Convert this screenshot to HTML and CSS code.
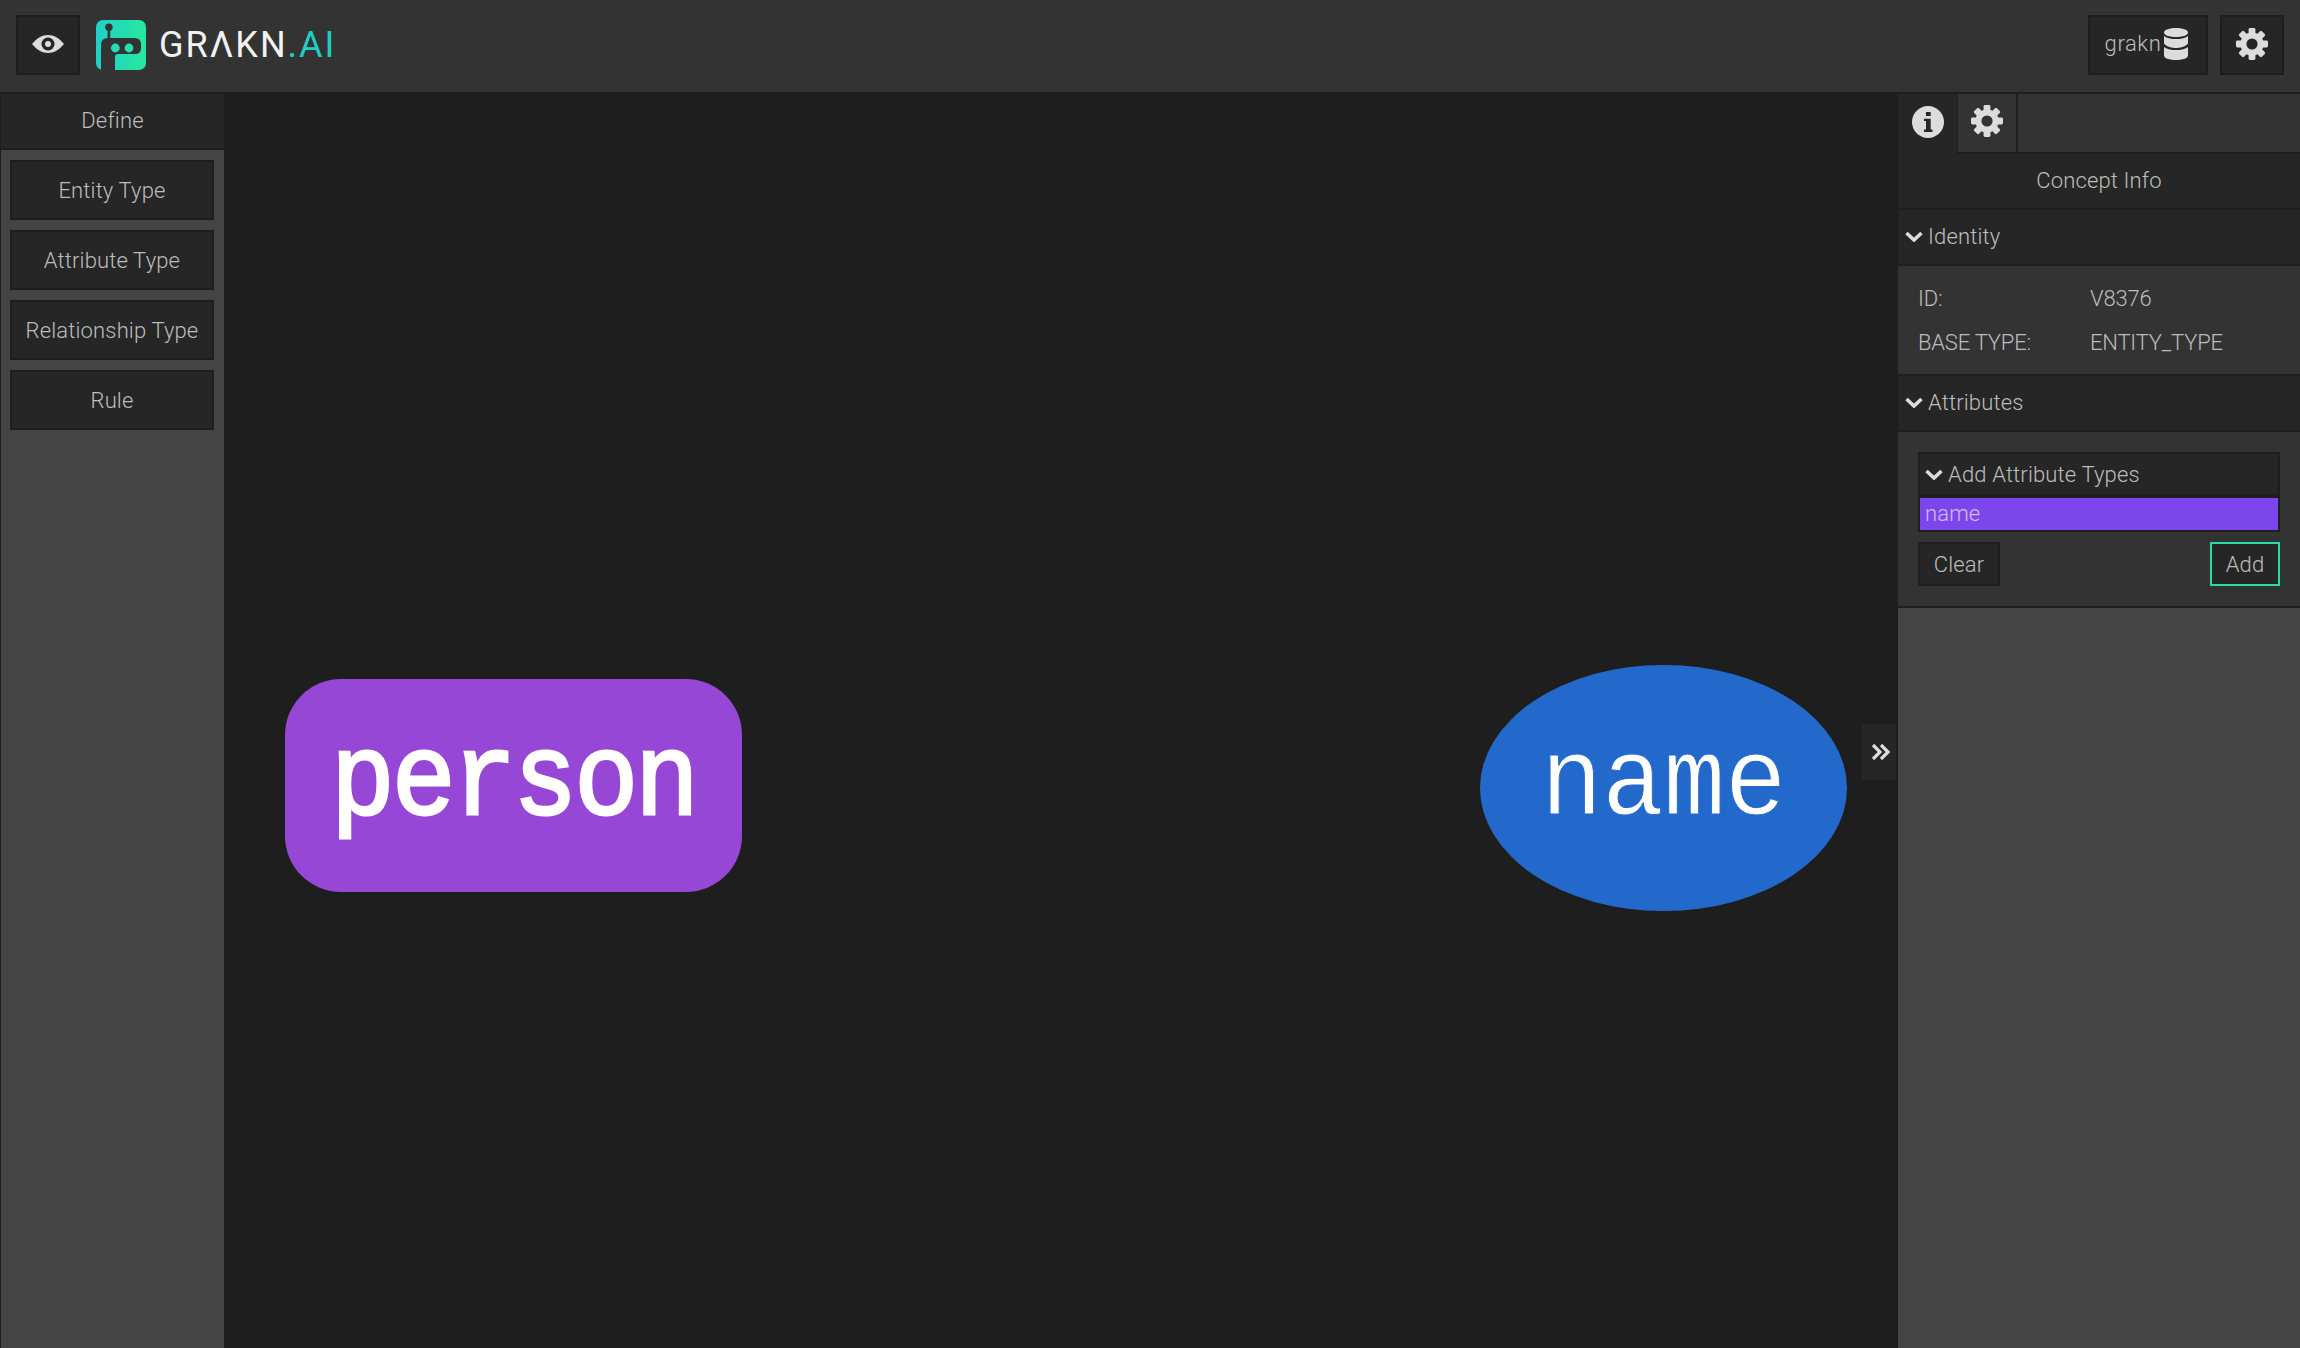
FILE: index.html
```html
<!DOCTYPE html>
<html>

<head>
  <meta charset="utf-8">
  <title>Grakn Workbase</title>
  <link rel="stylesheet" href="styles.css">
</head>

<body>
  <svg class="icon-defs" width="0" height="0">
    <symbol id="cog" viewBox="0 0 32 32">
      <circle cx="16" cy="16" r="8.6" fill="none" stroke="currentColor" stroke-width="6" />
      <rect x="12.6" y="0" width="6.8" height="9" rx="1.4" />
      <rect x="12.6" y="0" width="6.8" height="9" rx="1.4" transform="rotate(45 16 16)" />
      <rect x="12.6" y="0" width="6.8" height="9" rx="1.4" transform="rotate(90 16 16)" />
      <rect x="12.6" y="0" width="6.8" height="9" rx="1.4" transform="rotate(135 16 16)" />
      <rect x="12.6" y="0" width="6.8" height="9" rx="1.4" transform="rotate(180 16 16)" />
      <rect x="12.6" y="0" width="6.8" height="9" rx="1.4" transform="rotate(225 16 16)" />
      <rect x="12.6" y="0" width="6.8" height="9" rx="1.4" transform="rotate(270 16 16)" />
      <rect x="12.6" y="0" width="6.8" height="9" rx="1.4" transform="rotate(315 16 16)" />
    </symbol>
    <symbol id="chevron" viewBox="0 0 18 12">
      <path d="M1.5 3 L9 10 L16.5 3" fill="none" stroke="currentColor" stroke-width="3.6" />
    </symbol>
  </svg>

  <header class="topbar">
    <button class="top-btn eye-btn">
      <svg width="32" height="18" viewBox="0 0 32 18">
        <path d="M0 9 C5 3 10 0 16 0 C22 0 27 3 32 9 C27 15 22 18 16 18 C10 18 5 15 0 9 Z" fill="#dcdcdc" />
        <circle cx="16" cy="9" r="6.5" fill="#262626" />
        <circle cx="16" cy="9" r="3" fill="#dcdcdc" />
      </svg>
    </button>
    <div class="logo">
      <svg width="50" height="50" viewBox="0 0 50 50">
        <defs>
          <linearGradient id="logoGrad" x1="0" y1="0" x2="1" y2="0">
            <stop offset="0" stop-color="#1fd0c8" />
            <stop offset="1" stop-color="#27e89f" />
          </linearGradient>
        </defs>
        <rect width="50" height="50" rx="7" fill="url(#logoGrad)" />
        <path d="M5 50 V25 Q5 18 12 18 H38 Q45 18 45 24 V28 Q45 34 39 34 H22 Q19 34 19 37 V50 Z" fill="#333" />
        <rect x="11.6" y="7" width="2.6" height="12" fill="#333" />
        <circle cx="12.9" cy="7.3" r="3.7" fill="#333" />
        <circle cx="19.3" cy="28" r="4.4" fill="#25dbb8" />
        <circle cx="33" cy="28" r="4.4" fill="#26e0ae" />
      </svg>
      <span class="logo-text">GR&#923;KN<span class="logo-ai">.AI</span></span>
    </div>
    <div class="top-right">
      <button class="top-btn keyspace-btn">
        <span>grakn</span>
        <svg width="24" height="32" viewBox="0 0 24 32">
          <path d="M0 4.5 C0 1.5 6 0 12 0 C18 0 24 1.5 24 4.5 C24 7.5 18 9 12 9 C6 9 0 7.5 0 4.5 Z" fill="#dcdcdc" />
          <path d="M0 8 C3 10.5 8 11 12 11 C16 11 21 10.5 24 8 V15.5 C21 19 16 20 12 20 C8 20 3 19 0 15.5 Z" fill="#dcdcdc" />
          <path d="M0 19 C3 21.5 8 22 12 22 C16 22 21 21.5 24 19 V27.5 C24 30.5 18 32 12 32 C6 32 0 30.5 0 27.5 Z" fill="#dcdcdc" />
        </svg>
      </button>
      <button class="top-btn cog-btn">
        <svg class="cog" width="32" height="32"><use href="#cog" /></svg>
      </button>
    </div>
  </header>

  <main class="workspace">
    <aside class="left-panel">
      <div class="panel-title">Define</div>
      <div class="define-list">
        <button class="define-btn">Entity Type</button>
        <button class="define-btn">Attribute Type</button>
        <button class="define-btn">Relationship Type</button>
        <button class="define-btn">Rule</button>
      </div>
    </aside>

    <section class="canvas">
      <div class="node node-entity"><span>person</span></div>
      <div class="node node-attribute"><span>name</span></div>
      <button class="collapse-btn">
        <svg width="20" height="18" viewBox="0 0 20 18">
          <path d="M2 2 L9 9 L2 16 M10 2 L17 9 L10 16" fill="none" stroke="#dcdcdc" stroke-width="3.2" />
        </svg>
      </button>
    </section>

    <aside class="right-panel">
      <div class="tabs">
        <div class="tab tab-active">
          <svg width="32" height="32" viewBox="0 0 32 32">
            <circle cx="16" cy="16" r="16" fill="#dcdcdc" />
            <rect x="14" y="6" width="4.7" height="4" fill="#262626" />
            <path d="M12 12.7 H18.7 V23.5 H20.5 V26 H12 V23.5 H14 V15 H12 Z" fill="#262626" />
          </svg>
        </div>
        <div class="tab tab-settings">
          <svg class="cog" width="32" height="32"><use href="#cog" /></svg>
        </div>
        <div class="tab-rest"></div>
      </div>
      <div class="panel-title">Concept Info</div>

      <div class="section-head">
        <svg class="chevron" width="18" height="12"><use href="#chevron" /></svg>
        Identity
      </div>
      <div class="section-body identity">
        <div class="info-row"><span class="info-key">ID:</span><span>V8376</span></div>
        <div class="info-row"><span class="info-key">BASE TYPE:</span><span>ENTITY_TYPE</span></div>
      </div>

      <div class="section-head">
        <svg class="chevron" width="18" height="12"><use href="#chevron" /></svg>
        Attributes
      </div>
      <div class="section-body attributes">
        <div class="picker">
          <div class="picker-head">
            <svg class="chevron" width="18" height="12"><use href="#chevron" /></svg>
            Add Attribute Types
          </div>
          <div class="picker-item">name</div>
        </div>
        <div class="picker-actions">
          <button class="small-btn">Clear</button>
          <button class="small-btn small-btn-add">Add</button>
        </div>
      </div>
    </aside>
  </main>
</body>

</html>
```
FILE: styles.css
```css
* {
  box-sizing: border-box;
}

html,
body {
  height: 100%;
}

body {
  margin: 0;
  display: flex;
  flex-direction: column;
  overflow: hidden;
  background-color: #1e1e1e;
  color: #bdbdbd;
  font-family: Roboto, sans-serif;
  font-size: 22px;
  font-weight: 300;
  letter-spacing: 0.15px;
}

button {
  font: inherit;
  letter-spacing: inherit;
  color: inherit;
  padding: 0;
  cursor: pointer;
}

svg {
  display: block;
  flex: none;
}

.icon-defs {
  position: absolute;
}

.cog {
  fill: #dcdcdc;
  color: #dcdcdc;
}

.chevron {
  color: #dcdcdc;
}

/* top bar */
.topbar {
  height: 94px;
  flex: none;
  display: flex;
  align-items: center;
  padding: 0 16px 2px;
  background-color: #333;
  border-bottom: 2px solid #1e1e1e;
}

.top-btn {
  height: 60px;
  display: flex;
  align-items: center;
  justify-content: center;
  padding-bottom: 3px;
  background-color: #262626;
  border: 2px solid #1e1e1e;
}

.eye-btn {
  width: 64px;
}

.logo {
  display: flex;
  align-items: center;
  margin-left: 16px;
}

.logo-text {
  margin-left: 13px;
  font-size: 36px;
  font-weight: 400;
  letter-spacing: 2px;
  color: #f2f2f2;
}

.logo-ai {
  color: #1fcfc4;
}

.top-right {
  margin-left: auto;
  display: flex;
  gap: 12px;
}

.keyspace-btn {
  width: 120px;
  gap: 3px;
  padding-right: 3px;
  letter-spacing: 0.6px;
}

.cog-btn {
  width: 64px;
}

/* main layout */
.workspace {
  flex: 1;
  min-height: 0;
  display: flex;
}

.left-panel {
  width: 224px;
  flex: none;
  background-color: #444;
  border-left: 1px solid #1e1e1e;
}

.panel-title {
  height: 56px;
  display: flex;
  align-items: center;
  justify-content: center;
  padding-bottom: 2px;
  background-color: #262626;
  border-bottom: 2px solid #1e1e1e;
}

.define-list {
  display: flex;
  flex-direction: column;
  gap: 10px;
  padding: 10px 10px 0 9px;
}

.define-btn {
  height: 60px;
  background-color: #262626;
  border: 2px solid #1e1e1e;
}

.canvas {
  flex: 1;
  position: relative;
  background-color: #1e1e1e;
}

.node {
  position: absolute;
  display: flex;
  align-items: center;
  justify-content: center;
  color: #fff;
  font-family: "Liberation Mono", monospace;
}

.node-entity {
  left: 61px;
  top: 585px;
  width: 457px;
  height: 213px;
  border-radius: 56px;
  background-color: #9647d5;
  font-size: 116px;
  letter-spacing: -3.5px;
  -webkit-text-stroke: 3px #fff;
}

.node-attribute {
  left: 1256px;
  top: 571px;
  width: 367px;
  height: 246px;
  border-radius: 50%;
  background-color: #2369cb;
  font-size: 112px;
  letter-spacing: -0.5px;
  -webkit-text-stroke: 1px #2369cb;
}

.node span {
  display: block;
}

.node-entity span {
  transform: scaleX(0.92);
  margin-top: -6px;
}

.node-attribute span {
  transform: scaleX(0.92);
  margin-top: -8px;
}

.collapse-btn {
  position: absolute;
  right: 2px;
  top: 630px;
  width: 34px;
  height: 56px;
  display: flex;
  align-items: center;
  justify-content: center;
  padding-left: 3px;
  background-color: #262626;
  border: none;
}

/* right panel */
.right-panel {
  width: 402px;
  flex: none;
  background-color: #444;
}

.tabs {
  height: 60px;
  display: flex;
  background-color: #333;
}

.tab {
  display: flex;
  align-items: center;
  justify-content: center;
  padding-bottom: 4px;
}

.tab-active {
  width: 59px;
  background-color: #262626;
}

.tab-settings {
  width: 61px;
  border-left: 1px solid #1e1e1e;
  border-right: 2px solid #1e1e1e;
  border-bottom: 2px solid #1e1e1e;
}

.tab-rest {
  flex: 1;
  border-bottom: 2px solid #1e1e1e;
}

.section-head {
  height: 56px;
  display: flex;
  align-items: center;
  gap: 5px;
  padding: 0 0 2px 7px;
  background-color: #262626;
  border-bottom: 2px solid #1e1e1e;
}

.section-body {
  background-color: #333;
  border-bottom: 2px solid #1e1e1e;
  padding: 0 20px;
}

.identity {
  height: 110px;
  padding-top: 10px;
}

.info-row {
  height: 44px;
  display: flex;
  align-items: center;
  letter-spacing: -0.2px;
}

.info-key {
  width: 172px;
}

.attributes {
  height: 176px;
  padding-top: 20px;
}

.picker {
  border: 2px solid #1e1e1e;
  background-color: #1e1e1e;
}

.picker-head {
  height: 40px;
  display: flex;
  align-items: center;
  gap: 5px;
  padding-left: 5px;
  background-color: #262626;
  margin-bottom: 4px;
}

.picker-item {
  height: 32px;
  line-height: 32px;
  padding-left: 5px;
  background-color: #7d46ec;
  color: #d3bdf5;
}

.picker-actions {
  display: flex;
  justify-content: space-between;
  margin-top: 10px;
}

.small-btn {
  height: 44px;
  width: 82px;
  background-color: #262626;
  border: 2px solid #1e1e1e;
}

.small-btn-add {
  width: 70px;
  border-color: #2bdc9f;
}
```
